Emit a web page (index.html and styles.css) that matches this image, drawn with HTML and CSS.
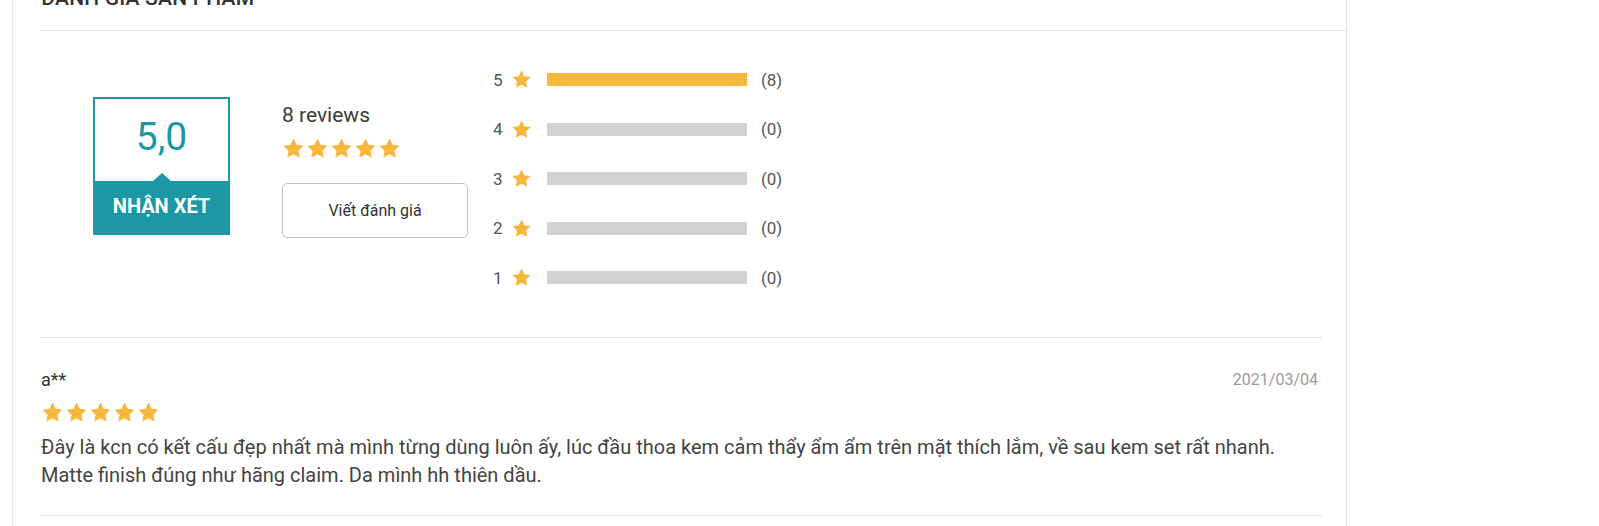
FILE: index.html
```html
<!DOCTYPE html>
<html lang="vi">
<head>
<meta charset="utf-8">
<title>Đánh giá sản phẩm</title>
<link rel="stylesheet" href="styles.css">
</head>
<body>
<svg width="0" height="0" class="defs" aria-hidden="true">
  <defs>
    <symbol id="star" viewBox="0 0 24 24">
      <path d="M12 1.6l3.2 6.6 7.2 1-5.2 5.1 1.25 7.2L12 18.1l-6.45 3.4 1.25-7.2L1.6 9.2l7.2-1z"/>
    </symbol>
  </defs>
</svg>
<div class="panel">
  <div class="head">
    <h2 class="title">ĐÁNH GIÁ SẢN PHẨM</h2>
  </div>
  <div class="content">
    <div class="summary">
      <div class="score-box">
        <div class="score-value">5,0</div>
        <div class="score-label">NHẬN XÉT</div>
      </div>
      <div class="overview">
        <div class="count">8 reviews</div>
        <div class="stars">
          <svg class="star"><use href="#star"/></svg>
          <svg class="star"><use href="#star"/></svg>
          <svg class="star"><use href="#star"/></svg>
          <svg class="star"><use href="#star"/></svg>
          <svg class="star"><use href="#star"/></svg>
        </div>
        <button class="write-btn">Viết đánh giá</button>
      </div>
      <div class="bars">
        <div class="bar-row"><span class="num">5</span><svg class="star small"><use href="#star"/></svg><span class="track"><span class="fill" style="width:100%"></span></span><span class="qty">(8)</span></div>
        <div class="bar-row"><span class="num">4</span><svg class="star small"><use href="#star"/></svg><span class="track"><span class="fill" style="width:0%"></span></span><span class="qty">(0)</span></div>
        <div class="bar-row"><span class="num">3</span><svg class="star small"><use href="#star"/></svg><span class="track"><span class="fill" style="width:0%"></span></span><span class="qty">(0)</span></div>
        <div class="bar-row"><span class="num">2</span><svg class="star small"><use href="#star"/></svg><span class="track"><span class="fill" style="width:0%"></span></span><span class="qty">(0)</span></div>
        <div class="bar-row"><span class="num">1</span><svg class="star small"><use href="#star"/></svg><span class="track"><span class="fill" style="width:0%"></span></span><span class="qty">(0)</span></div>
      </div>
    </div>
    <div class="review">
      <div class="review-head">
        <span class="author">a**</span>
        <span class="date">2021/03/04</span>
      </div>
      <div class="stars review-stars">
        <svg class="star"><use href="#star"/></svg>
        <svg class="star"><use href="#star"/></svg>
        <svg class="star"><use href="#star"/></svg>
        <svg class="star"><use href="#star"/></svg>
        <svg class="star"><use href="#star"/></svg>
      </div>
      <p class="review-text">Đây là kcn có kết cấu đẹp nhất mà mình từng dùng luôn ấy, lúc đầu thoa kem cảm thẩy ẩm ẩm trên mặt thích lắm, về sau kem set rất nhanh. Matte finish đúng như hãng claim. Da mình hh thiên dầu.</p>
    </div>
  </div>
</div>
</body>
</html>
```

FILE: styles.css
```css
* { box-sizing: border-box; }

html, body {
  margin: 0;
  padding: 0;
  background: #ffffff;
  height: 526px;
  overflow: hidden;
  font-family: Roboto, "Noto Sans", "Liberation Sans", sans-serif;
  color: #333333;
}

.defs { position: absolute; }

.panel {
  display: flow-root;
  margin-left: 12px;
  width: 1335px;
  height: 526px;
  border-left: 1px solid #e6e6e6;
  border-right: 1px solid #e3e3e3;
}

.head {
  margin-top: -14px;
  margin-left: 28px;
  height: 45px;
  border-bottom: 1px solid #e2e2e2;
}

.title {
  margin: 0;
  font-size: 21px;
  line-height: 24px;
  font-weight: 500;
  color: #333333;
  letter-spacing: 0.2px;
}

.content {
  margin-left: 28px;
  margin-right: 24px;
}

.summary {
  display: flex;
  align-items: flex-start;
  height: 307px;
  padding-left: 52px;
  border-bottom: 1px solid #e3e3e3;
}

.score-box {
  margin-top: 66px;
  width: 137px;
  height: 138px;
  border: 2px solid #1b98a4;
  display: flex;
  flex-direction: column;
}

.score-value {
  height: 82px;
  line-height: 76px;
  text-align: center;
  font-size: 39px;
  color: #1b98a4;
}

.score-label {
  flex: 1;
  position: relative;
  background: #1b98a4;
  color: #ffffff;
  font-size: 20px;
  font-weight: 700;
  display: flex;
  align-items: center;
  justify-content: center;
  padding-bottom: 2px;
}

.score-label::before {
  content: "";
  position: absolute;
  top: -8px;
  left: 50%;
  margin-left: -9px;
  border-left: 9px solid transparent;
  border-right: 9px solid transparent;
  border-bottom: 8px solid #1b98a4;
}

.overview {
  margin-left: 52px;
  margin-top: 72px;
  width: 186px;
  display: flex;
  flex-direction: column;
  align-items: flex-start;
}

.count {
  font-size: 21px;
  line-height: 24px;
  color: #3a3a3a;
}

.stars {
  display: flex;
  gap: 1px;
  margin-top: 10px;
}

.star {
  width: 23px;
  height: 23px;
  fill: #f6b73c;
}

.star.small {
  width: 21px;
  height: 21px;
}

.write-btn {
  margin-top: 23px;
  width: 186px;
  height: 55px;
  border: 1px solid #c4c4c4;
  border-radius: 5px;
  background: #ffffff;
  font-family: inherit;
  font-size: 16px;
  color: #333333;
}

.bars {
  margin-left: 25px;
  margin-top: 24px;
  display: flex;
  flex-direction: column;
}

.bar-row {
  height: 49.5px;
  display: flex;
  align-items: center;
  font-size: 17px;
  color: #555555;
}

.num {
  width: 10px;
}

.bar-row .star {
  margin-left: 8px;
}

.track {
  margin-left: 15px;
  width: 200px;
  height: 13px;
  background: #d2d2d2;
  display: flex;
}

.fill {
  background: #f6b93d;
  height: 100%;
}

.qty {
  margin-left: 14px;
}

.review {
  padding-top: 31px;
  padding-bottom: 26px;
  border-bottom: 1px solid #e3e3e3;
}

.review-head {
  display: flex;
  justify-content: space-between;
  align-items: center;
  height: 20px;
  padding-right: 4px;
}

.author { color: #333333; font-size: 18px; }

.date { color: #9a9a9a; font-size: 16px; }

.review-stars {
  margin-top: 12px;
}

.review-text {
  margin: 9px 0 0;
  font-size: 20px;
  line-height: 28px;
  color: #444444;
}
```
